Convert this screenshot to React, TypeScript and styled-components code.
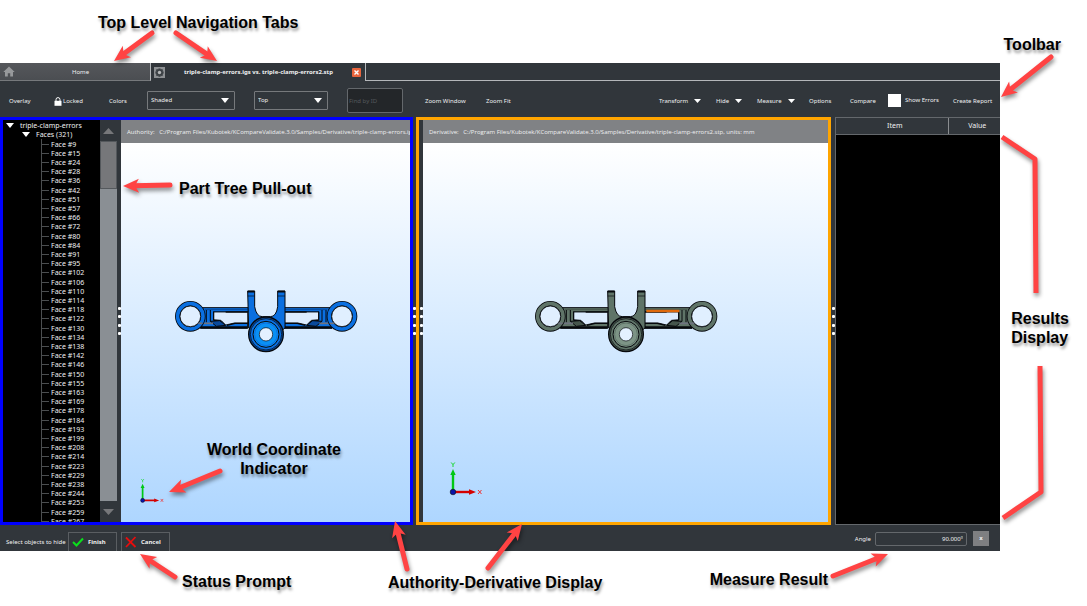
import React from "react";
import styled, { createGlobalStyle, css } from "styled-components";

const GlobalStyle = createGlobalStyle`
  * { box-sizing: border-box; }
  body {
    margin: 0;
    background: #fff;
    color: #eff0f1;
    font: 7px/9px "Noto Sans", "Open Sans", sans-serif;
  }
  button, input, select { font: inherit; color: inherit; margin: 0; }
`;

const Figure = styled.main`
  position: relative;
  padding: 63px 87px 55px 0;
`;

const AppWindow = styled.div`
  background: #31363b;
`;

/* ---------- tabs ---------- */

const TabBar = styled.nav`
  display: flex;
  height: 18px;
`;

const Tab = styled.button<{ $active?: boolean }>`
  display: flex;
  align-items: center;
  border: 0;
  padding: 0 4px 0 3px;
  width: 151px;
  background: linear-gradient(#55575b, #4b4e52);
  border-right: 1px solid #b4b7ba;
  border-bottom: 1px solid #76797c;
  font-size: 6px;
  ${(p) =>
    p.$active &&
    css`
      width: 215px;
      background: #31363b;
      border-bottom: 0;
      font-weight: 700;
    `}
`;

const TabLabel = styled.span`
  flex: 1;
  padding-top: 1px;
  text-align: center;
`;

const TabFiller = styled.div`
  flex: 1;
  border-bottom: 1px solid #b4b7ba;
`;

/* ---------- toolbar ---------- */

const Toolbar = styled.header`
  display: flex;
  justify-content: space-between;
  height: 36px;
  padding-left: 9px;
  font-size: 6px;
`;

const ToolGroup = styled.div`
  display: flex;
  align-items: center;
  padding-top: 3px;
`;

const ToolButton = styled.button<{ $slot: number }>`
  display: flex;
  align-items: center;
  gap: 6px;
  width: ${(p) => p.$slot}px;
  padding: 2px 0 0;
  border: 0;
  background: none;
  white-space: nowrap;
  > svg { margin-bottom: 2px; }
`;

const IconText = styled.span`
  display: flex;
  align-items: center;
  gap: 1px;
`;

const SelectBox = styled.div<{ $width: number }>`
  position: relative;
  width: ${(p) => p.$width}px;
  margin-right: 19px;
  svg {
    position: absolute;
    right: 6px;
    top: 7px;
    pointer-events: none;
  }
`;

const Select = styled.select`
  appearance: none;
  display: block;
  width: 100%;
  height: 19px;
  padding: 0 3px;
  border: 1px solid #76797c;
  border-radius: 1px;
  background: #31363b;
`;

const FindInput = styled.input`
  width: 56px;
  height: 25px;
  margin-right: 22px;
  padding: 0 1px;
  border: 1px solid #64686c;
  border-radius: 2px;
  background: #232629;
  &::placeholder { color: #55595d; opacity: 1; }
`;

const CheckLabel = styled.label`
  display: flex;
  align-items: center;
  gap: 4px;
  width: 65px;
  white-space: nowrap;
`;

const CheckBox = styled.input`
  appearance: none;
  width: 13px;
  height: 13px;
  margin: 0;
  background: #fff;
`;

/* ---------- work area ---------- */

const WorkArea = styled.div`
  display: grid;
  grid-template-columns: minmax(0, 413fr) 3px minmax(0, 415fr) 4px minmax(165px, 165fr);
  grid-template-rows: minmax(0, 1fr);
  height: 408px;
`;

const Pane = styled.section<{ $color: string }>`
  display: flex;
  min-width: 0;
  border: 3px solid ${(p) => p.$color};
`;

const Tree = styled.div`
  flex: none;
  width: 97px;
  overflow: hidden;
  background: #000;
`;

const TreeRows = styled.ul`
  display: grid;
  grid-auto-rows: 1fr;
  height: 406px;
  margin: 0;
  padding: 1px 0 0;
  list-style: none;
  align-items: center;
`;

const TreeRow = styled.li<{ $depth: number }>`
  display: flex;
  align-items: center;
  gap: 6px;
  height: 100%;
  padding-left: ${(p) => 3 + p.$depth * 16}px;
  white-space: nowrap;
`;

const FaceRow = styled.li`
  display: flex;
  align-items: center;
  gap: 2px;
  height: 100%;
  margin-left: 38px;
  border-left: 1px solid #4b4e50;
  white-space: nowrap;
  &::before {
    content: "";
    width: 7px;
    height: 1px;
    background: #4b4e50;
  }
`;

const Scrollbar = styled.div`
  flex: none;
  display: flex;
  flex-direction: column;
  width: 17px;
  background: #8a8f94;
`;

const ScrollArrow = styled.button`
  display: flex;
  align-items: center;
  justify-content: center;
  height: 21px;
  padding: 0;
  border: 0;
  background: #31363b;
`;

const ScrollThumb = styled.div`
  height: 48px;
  border: 1px solid #54585c;
  background: #76777a;
`;

const ScrollTrack = styled.div`
  flex: 1;
`;

const Splitter = styled.div<{ $width: number }>`
  flex: none;
  display: flex;
  align-items: center;
  justify-content: center;
  width: ${(p) => p.$width}px;
  background: #31363b;
`;

const Grip = styled.span`
  display: flex;
  flex-direction: column;
  justify-content: space-between;
  height: 28px;
  i {
    width: 3px;
    height: 3px;
    border-radius: 1px;
    background: #fff;
  }
`;

const View = styled.div`
  flex: 1;
  min-width: 0;
  display: flex;
  flex-direction: column;
`;

const PathBar = styled.div`
  flex: none;
  height: 23px;
  padding-left: 6px;
  overflow: hidden;
  background: #808285;
  font-family: "Open Sans", "Noto Sans", sans-serif;
  font-size: 6px;
  line-height: 24px;
  white-space: pre;
`;

const Canvas = styled.div`
  position: relative;
  flex: 1;
  display: flex;
  align-items: center;
  justify-content: center;
  padding-bottom: 23px;
  background: linear-gradient(#ffffff, #aed6ff);
`;

const Axes = styled.svg<{ $left: number; $bottom: number }>`
  position: absolute;
  left: ${(p) => p.$left}px;
  bottom: ${(p) => p.$bottom}px;
`;

const Results = styled.div`
  display: flex;
  flex-direction: column;
  border: 1px solid #64686c;
  border-right: 0;
  background: #000;
`;

const ResultTable = styled.table`
  width: 100%;
  border-collapse: collapse;
  table-layout: fixed;
  th {
    height: 16px;
    padding: 0 0 0 6px;
    background: #31363b;
    border-bottom: 1px solid #64686c;
    font-weight: 400;
  }
  th + th {
    width: 52px;
    border-left: 1px solid #8a8d90;
  }
`;

/* ---------- status bar ---------- */

const StatusBar = styled.footer`
  display: flex;
  align-items: flex-end;
  height: 26px;
  padding-left: 6px;
  font-size: 6px;
`;

const Prompt = styled.span`
  width: 62px;
  line-height: 18px;
  white-space: nowrap;
`;

const PromptButton = styled.button`
  display: flex;
  align-items: center;
  gap: 4px;
  width: 49px;
  height: 19px;
  margin-right: 4px;
  padding: 0 3px;
  border: 1px solid #5a5e62;
  border-bottom: 0;
  background: #31363b;
  font-weight: 700;
`;

const Measure = styled.label`
  display: flex;
  align-items: center;
  gap: 4px;
  margin: 0 6px 5px auto;
`;

const MeasureInput = styled.input`
  width: 92px;
  height: 14px;
  padding: 0 3px;
  border: 1px solid #64686c;
  border-radius: 2px;
  background: #31363b;
  text-align: right;
`;

const ClearButton = styled.button`
  width: 16px;
  height: 15px;
  margin: 0 11px 5px 0;
  padding: 0;
  border: 0;
  background: #7e7f81;
  font-weight: 700;
  line-height: 15px;
`;

/* ---------- callouts ---------- */

const CalloutLayer = styled.svg<{ $side: "left" | "right" }>`
  position: absolute;
  top: 0;
  ${(p) => p.$side}: 0;
  overflow: visible;
  pointer-events: none;
  filter: drop-shadow(1px 3px 2px rgba(0, 0, 0, 0.45));
`;

const Callout = styled.p<{ $top: number; $left?: number; $right?: number; $center?: boolean }>`
  position: absolute;
  top: ${(p) => p.$top}px;
  ${(p) => (p.$left !== undefined ? `left: ${p.$left}px;` : `right: ${p.$right}px;`)}
  margin: 0;
  color: #000;
  font: 700 16px/19px "Liberation Sans", Arial, sans-serif;
  text-align: ${(p) => (p.$center ? "center" : "left")};
  text-shadow: 1px 3px 3px rgba(0, 0, 0, 0.4);
  white-space: nowrap;
`;

/* ---------- drawings ---------- */

const Caret = ({ w = 7, fill = "#fff", up = false }: { w?: number; fill?: string; up?: boolean }) => (
  <svg width={w} height={w === 7 ? 4 : w === 11 ? 6 : 5} viewBox="0 0 10 6" preserveAspectRatio="none" aria-hidden="true">
    <path d={up ? "M0 6H10L5 0Z" : "M0 0H10L5 6Z"} fill={fill} />
  </svg>
);

const HomeIcon = () => (
  <svg width="12" height="11" viewBox="0 0 12 11" aria-hidden="true">
    <path d="M6 0.4 11.7 6H10v4.6H7.2V7.2H4.8v3.4H2V6H.3Z" fill="#97999b" />
  </svg>
);

const GearIcon = () => (
  <svg width="11" height="11" viewBox="0 0 11 11" aria-hidden="true">
    <rect width="11" height="11" fill="#8d9093" />
    <path
      d="M4.500 1.500h2l.3 1.100 1.200-.6 1.100 1.100-.6 1.200 1.100.3v2l-1.100.3.600 1.200-1.100 1.100-1.200-.6-.3 1.100h-2l-.3-1.100-1.200.6-1.100-1.100.6-1.200-1.100-.3v-2l1.100-.3-.6-1.200 1.100-1.100 1.200.6Z"
      fill="#3b4044"
    />
    <circle cx="5.500" cy="5.500" r="1.700" fill="#b4b6b8" />
  </svg>
);

const CloseIcon = () => (
  <svg width="9" height="9" viewBox="0 0 9 9" aria-hidden="true">
    <rect width="9" height="9" rx="1" fill="#e8643c" />
    <path d="M2.500 2.500 6.500 6.500M6.500 2.500 2.500 6.500" stroke="#fff" strokeWidth="1.400" />
  </svg>
);

const LockIcon = () => (
  <svg width="8" height="9" viewBox="0 0 8 9" aria-hidden="true">
    <path d="M2 4V2.600a2 2 0 0 1 4 0V4" fill="none" stroke="#fff" strokeWidth="1" />
    <rect x=".5" y="3.800" width="7" height="5" fill="#fff" />
  </svg>
);

const CheckIcon = () => (
  <svg width="12" height="10" viewBox="0 0 12 10" aria-hidden="true">
    <path d="M1 5 4.500 8.500 11 1.500" fill="none" stroke="#0be01c" strokeWidth="2" />
  </svg>
);

const CrossIcon = () => (
  <svg width="12" height="12" viewBox="0 0 12 12" aria-hidden="true">
    <path d="M1 1.500 10.500 11M10.500 1 1 11" fill="none" stroke="#e80d0d" strokeWidth="1.800" />
  </svg>
);

interface ClampColors {
  body: string;
  light: string;
  shade: string;
  mark?: string;
}

/* One arm of the clamp; the opposite arm is its mirror image. */
const ClampArm = ({ body, shade }: ClampColors) => (
  <g stroke="#06080c" strokeWidth="3">
    <path d="M124 111H264V124H160V150L176 148 200 160 262 155V173H120Z" fill={body} />
    <path d="M160 124H262V157L222 157 196 163 182 149 160 147Z" fill="#dcecff" strokeWidth="2.500" />
    <path d="M134 117H262" stroke={shade} strokeWidth="3" />
    <path d="M196 124H262" strokeWidth="4" />
    <path d="M200 164 224 158H262" strokeWidth="4" fill="none" />
    <path d="M138 118V155M150 118V152M160 122V148" strokeWidth="3" />
    <path d="M120 170H262" strokeWidth="6" />
    <path d="M150 152 178 150 196 164 168 167Z" fill={shade} />
    <path d="M114 158H158" stroke="#6f7380" strokeWidth="5" />
    <circle cx="90" cy="137" r="38" fill="none" strokeWidth="16" />
    <circle cx="90" cy="137" r="38" fill="none" stroke={body} strokeWidth="11" />
    <circle cx="90" cy="137" r="31" fill="#e0efff" strokeWidth="2.500" />
    <path d="M114 158H126" stroke="#6f7380" strokeWidth="5" />
  </g>
);

const Clamp = (colors: ClampColors) => (
  <svg width="184" height="63" viewBox="41 58 552 189" role="img" aria-label="Triple clamp model">
    <ClampArm {...colors} />
    <g transform="translate(635 0) scale(-1 1)">
      <ClampArm {...colors} />
    </g>
    {colors.mark && <path d="M378 121H477" stroke={colors.mark} strokeWidth="8" />}
    <g stroke="#06080c" strokeWidth="3">
      <path
        d="M262 61H283V108Q288 138 306 138H330Q348 138 352 108V61H374V172L350 190H285L265 172Z"
        fill={colors.body}
      />
      <path d="M262 76H283M352 76H374" strokeWidth="2" />
      <path d="M262 63H283M352 63H374" strokeWidth="5" />
      <circle cx="317" cy="191" r="52" fill={colors.shade} strokeWidth="4" />
      <circle cx="317" cy="191" r="47" fill={colors.body} strokeWidth="2" />
      <circle cx="317" cy="191" r="39" fill={colors.light} strokeWidth="3" />
      <circle cx="317" cy="191" r="34" fill="none" stroke={colors.body} strokeWidth="3" />
      <circle cx="317" cy="191" r="20" fill="#e4f1ff" strokeWidth="2" />
    </g>
  </svg>
);

const Triad = ({ size, left, bottom }: { size: number; left: number; bottom: number }) => (
  <Axes $left={left} $bottom={bottom} width={size} height={size} viewBox="0 0 36 36" aria-hidden="true">
    <path d="M5 31V12" stroke="#00c814" strokeWidth="2.400" />
    <path d="M2.300 14 5 8 7.700 14Z" fill="#00c814" />
    <path d="M3.200 1.500 5 3.700 6.800 1.500M5 3.700V6" stroke="#18d82c" fill="none" />
    <path d="M5 31H22" stroke="#d40000" strokeWidth="2.400" />
    <path d="M21 28.300 28 31 21 33.700Z" fill="#d40000" />
    <path d="M30 29 33.500 33M33.500 29 30 33" stroke="#f03030" fill="none" />
    <circle cx="5" cy="31" r="2.800" fill="#0a14a8" stroke="#101010" strokeWidth=".6" />
  </Axes>
);

type Point = [number, number];
const RED = "#ff4343";

const Arrow = ({ from, to }: { from: Point; to: Point }) => {
  const length = Math.hypot(to[0] - from[0], to[1] - from[1]);
  const angle = (Math.atan2(to[1] - from[1], to[0] - from[0]) * 180) / Math.PI;
  return (
    <g transform={`translate(${to[0]} ${to[1]}) rotate(${angle})`}>
      <path d={`M${-length} 0H-10`} stroke={RED} strokeWidth="5" strokeLinecap="round" />
      <path d="M0 0-16-7-12 0-16 7Z" fill={RED} />
    </g>
  );
};

const GripDots = () => (
  <Grip>
    <i />
    <i />
    <i />
    <i />
  </Grip>
);

const faces = [
  9, 15, 24, 28, 36, 42, 51, 57, 66, 72, 80, 84, 91, 95, 102, 106, 110, 114, 118, 122, 130, 134, 138, 142, 146, 150,
  155, 163, 169, 178, 184, 193, 199, 208, 214, 223, 229, 238, 244, 253, 259, 267,
];

export default function App() {
  return (
    <Figure>
      <GlobalStyle />
      <AppWindow>
        <TabBar>
          <Tab>
            <HomeIcon />
            <TabLabel>Home</TabLabel>
          </Tab>
          <Tab $active>
            <GearIcon />
            <TabLabel>triple-clamp-errors.igs vs. triple-clamp-errors2.stp</TabLabel>
            <CloseIcon />
          </Tab>
          <TabFiller />
        </TabBar>

        <Toolbar>
          <ToolGroup>
            <ToolButton $slot={45}>Overlay</ToolButton>
            <ToolButton $slot={55}>
              <IconText>
                <LockIcon />
                Locked
              </IconText>
            </ToolButton>
            <ToolButton $slot={38}>Colors</ToolButton>
            <SelectBox $width={88}>
              <Select aria-label="Display mode">
                <option>Shaded</option>
              </Select>
              <Caret w={8} />
            </SelectBox>
            <SelectBox $width={74}>
              <Select aria-label="View">
                <option>Top</option>
              </Select>
              <Caret w={8} />
            </SelectBox>
            <FindInput placeholder="Find by ID" aria-label="Find by ID" />
            <ToolButton $slot={61}>Zoom Window</ToolButton>
            <ToolButton $slot={40}>Zoom Fit</ToolButton>
          </ToolGroup>
          <ToolGroup>
            <ToolButton $slot={57}>
              Transform <Caret />
            </ToolButton>
            <ToolButton $slot={41}>
              Hide <Caret />
            </ToolButton>
            <ToolButton $slot={52}>
              Measure <Caret />
            </ToolButton>
            <ToolButton $slot={41}>Options</ToolButton>
            <ToolButton $slot={38}>Compare</ToolButton>
            <CheckLabel>
              <CheckBox type="checkbox" />
              Show Errors
            </CheckLabel>
            <ToolButton $slot={47}>Create Report</ToolButton>
          </ToolGroup>
        </Toolbar>

        <WorkArea>
          <Pane $color="#0000ff">
            <Tree>
              <TreeRows>
                <TreeRow $depth={0}>
                  <Caret w={8} />
                  triple-clamp-errors
                </TreeRow>
                <TreeRow $depth={1}>
                  <Caret w={8} />
                  Faces (321)
                </TreeRow>
                {faces.map((id) => (
                  <FaceRow key={id}>Face #{id}</FaceRow>
                ))}
              </TreeRows>
            </Tree>
            <Scrollbar>
              <ScrollArrow aria-label="Scroll up">
                <Caret w={11} fill="#76777a" up />
              </ScrollArrow>
              <ScrollThumb />
              <ScrollTrack />
              <ScrollArrow aria-label="Scroll down">
                <Caret w={11} fill="#76777a" />
              </ScrollArrow>
            </Scrollbar>
            <Splitter $width={4}>
              <GripDots />
            </Splitter>
            <View>
              <PathBar>
                {"Authority:   C:/Program Files/Kubotek/KCompareValidate.3.0/Samples/Derivative/triple-clamp-errors.ig"}
              </PathBar>
              <Canvas>
                <Clamp body="#0a6fe0" light="#0a90f4" shade="#0a4a9c" />
                <Triad size={26} left={18} bottom={18} />
              </Canvas>
            </View>
          </Pane>
          <Splitter $width={3}>
            <GripDots />
          </Splitter>
          <Pane $color="#ffa500">
            <Splitter $width={4}>
              <GripDots />
            </Splitter>
            <View>
              <PathBar>
                {"Derivative:   C:/Program Files/Kubotek/KCompareValidate.3.0/Samples/Derivative/triple-clamp-errors2.stp, units: mm"}
              </PathBar>
              <Canvas>
                <Clamp body="#5f7468" light="#7d9486" shade="#46564d" mark="#e0690c" />
                <Triad size={36} left={25} bottom={25} />
              </Canvas>
            </View>
          </Pane>
          <Splitter $width={4}>
            <GripDots />
          </Splitter>
          <Results>
            <ResultTable>
              <thead>
                <tr>
                  <th>Item</th>
                  <th>Value</th>
                </tr>
              </thead>
            </ResultTable>
          </Results>
        </WorkArea>

        <StatusBar>
          <Prompt>Select objects to hide</Prompt>
          <PromptButton>
            <CheckIcon />
            Finish
          </PromptButton>
          <PromptButton>
            <CrossIcon />
            Cancel
          </PromptButton>
          <Measure>
            Angle
            <MeasureInput defaultValue="90.000º" />
          </Measure>
          <ClearButton aria-label="Clear measurement">x</ClearButton>
        </StatusBar>
      </AppWindow>

      <CalloutLayer $side="left" width="620" height="606" viewBox="0 0 620 606" fill="none" aria-hidden="true">
        <Arrow from={[152, 33]} to={[114, 61]} />
        <Arrow from={[176, 33]} to={[217, 61]} />
        <Arrow from={[170, 185]} to={[123, 186]} />
        <Arrow from={[220, 471]} to={[169, 492]} />
        <Arrow from={[175, 577]} to={[140, 554]} />
        <Arrow from={[407, 569]} to={[395, 521]} />
        <Arrow from={[488, 568]} to={[522, 524]} />
      </CalloutLayer>
      <CalloutLayer $side="right" width="260" height="606" viewBox="827 0 260 606" fill="none" aria-hidden="true">
        <Arrow from={[1051, 57]} to={[1001, 97]} />
        <Arrow from={[833, 576]} to={[888, 554]} />
        <path d="M1002 137 1035 159 1036 293" stroke={RED} strokeWidth="5" strokeLinejoin="round" />
        <path d="M1040 366 1041 492 1003 518" stroke={RED} strokeWidth="5" strokeLinejoin="round" />
      </CalloutLayer>

      <Callout $top={13} $left={98}>Top Level Navigation Tabs</Callout>
      <Callout $top={35} $right={26}>Toolbar</Callout>
      <Callout $top={179} $left={179}>Part Tree Pull-out</Callout>
      <Callout $top={440} $left={207} $center>
        World Coordinate
        <br />
        Indicator
      </Callout>
      <Callout $top={309} $right={18}>
        Results
        <br />
        Display
      </Callout>
      <Callout $top={572} $left={182}>Status Prompt</Callout>
      <Callout $top={573} $left={388}>Authority-Derivative Display</Callout>
      <Callout $top={570} $right={259}>Measure Result</Callout>
    </Figure>
  );
}
